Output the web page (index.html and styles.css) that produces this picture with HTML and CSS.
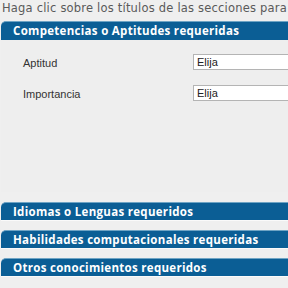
FILE: index.html
```html
<!DOCTYPE html>
<html lang="es">
<head>
  <meta charset="UTF-8" />
  <title>Requisitos del puesto</title>
  <link rel="stylesheet" href="styles.css">
</head>
<body>
  <p class="intro">Haga clic sobre los títulos de las secciones para</p>

  <div class="section open">
    <h2 class="section-title">Competencias o Aptitudes requeridas</h2>
    <div class="section-body">
      <div class="row">
        <label for="aptitud">Aptitud</label>
        <select id="aptitud"><option>Elija</option></select>
      </div>
      <div class="row">
        <label for="importancia">Importancia</label>
        <select id="importancia"><option>Elija</option></select>
      </div>
    </div>
  </div>

  <div class="section">
    <h2 class="section-title">Idiomas o Lenguas requeridos</h2>
  </div>
  <div class="section">
    <h2 class="section-title">Habilidades computacionales requeridas</h2>
  </div>
  <div class="section">
    <h2 class="section-title">Otros conocimientos requeridos</h2>
  </div>
</body>
</html>
```
FILE: styles.css
```css
body { margin: 0; background: #efefef; font-family: "Liberation Sans", Arial, sans-serif; overflow: hidden; width: 360px; }
.intro { margin: 0; padding: 1px 0 0 2px; height: 21px; box-sizing: border-box; font-family: "DejaVu Sans", sans-serif; font-size: 11.5px; letter-spacing: 0.2px; color: #5a5a5a; white-space: nowrap; }
.section { margin-left: 1px; margin-bottom: 10px; }
.section-title { margin: 0; height: 17px; line-height: 17px; padding-left: 12px; background: #0b5e95; border-top: 1px solid #6fa4c4; border-radius: 5px 0 0 0; box-shadow: 0 1px 0 #fafafa; color: #fff; font-family: "Open Sans", sans-serif; font-size: 11.5px; font-weight: bold; letter-spacing: 0.3px; white-space: nowrap; }
.open .section-title { height: 18px; line-height: 18px; }
.section-body { height: 152px; padding-top: 17px; box-sizing: border-box; background: #eeeeee; }
.row { display: flex; align-items: flex-start; height: 31px; }
.row label { width: 170px; padding: 0 0 0 22px; font-size: 11px; color: #333; }
.row select { width: 140px; height: 16px; margin-top: -3px; padding: 0 0 0 3px; background: #fff; border: 1px solid #b4b4b4; border-radius: 0; font-family: "Liberation Sans", Arial, sans-serif; font-size: 11px; color: #222; appearance: none; }
```
